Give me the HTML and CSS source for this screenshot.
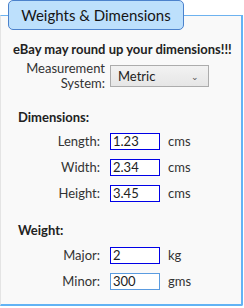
FILE: index.html
```html
<!DOCTYPE html>
<html lang="en">
<head>
  <meta charset="UTF-8">
  <title>Weights &amp; Dimensions</title>
  <link rel="stylesheet" href="styles.css">
</head>
<body>

  <fieldset class="group">
    <legend class="tab">Weights &amp; Dimensions</legend>

    <p class="warn">eBay may round up your dimensions!!!</p>

    <div class="row system">
      <label class="lbl">Measurement<br>System:</label>
      <div class="select">Metric <span class="chev">&#8964;</span></div>
    </div>

    <h3 class="section">Dimensions:</h3>

    <div class="row">
      <label class="lbl">Length:</label>
      <input class="box" value="1.23">
      <span class="unit">cms</span>
    </div>
    <div class="row">
      <label class="lbl">Width:</label>
      <input class="box" value="2.34">
      <span class="unit">cms</span>
    </div>
    <div class="row">
      <label class="lbl">Height:</label>
      <input class="box" value="3.45">
      <span class="unit">cms</span>
    </div>

    <h3 class="section weight">Weight:</h3>

    <div class="row">
      <label class="lbl">Major:</label>
      <input class="box" value="2">
      <span class="unit">kg</span>
    </div>
    <div class="row">
      <label class="lbl">Minor:</label>
      <input class="box soft" value="300">
      <span class="unit">gms</span>
    </div>
  </fieldset>

</body>
</html>
```

FILE: styles.css
```css
body {
  margin: 0;
  background: #fff;
  font-family: Lato, "Open Sans", sans-serif;
  font-size: 13px;
  color: #222;
}
.group {
  margin: 0;
  padding: 0;
  width: 243px;
  height: 306px;
  box-sizing: border-box;
  background: #f9f9f9;
  border-top: 1px solid #6db2ef;
  border-right: 2px solid #62b3f5;
  border-bottom: 2px solid #62b3f5;
  border-left: 1px solid #e4e4e4;
  border-radius: 0 0 2px 0;
}
.tab {
  margin-left: 7px;
  width: 176px;
  height: 30px;
  box-sizing: border-box;
  padding: 0 0 1px;
  display: flex;
  align-items: center;
  justify-content: center;
  font-size: 15px;
  color: #151515;
  background: #bde0fc;
  border: 1px solid #4c82cc;
  border-radius: 5px;
}
.warn {
  margin: 11px 0 0 12px;
  font-weight: bold;
  line-height: 16px;
}
.row {
  display: flex;
  align-items: center;
  height: 26px;
}
.lbl {
  width: 99px;
  margin-right: 10px;
  text-align: right;
  color: #333;
}
.system {
  height: 30px;
  margin-top: 4px;
}
.system .lbl {
  width: 104px;
  margin-right: 5px;
  line-height: 15px;
}
.select {
  width: 99px;
  height: 22px;
  box-sizing: border-box;
  padding-left: 7px;
  display: flex;
  align-items: center;
  justify-content: space-between;
  border: 1px solid #acacac;
  background: linear-gradient(#f2f2f2, #e6e6e6);
  color: #222;
}
.chev {
  margin-right: 9px;
  font-size: 9px;
  color: #555;
}
.section {
  margin: 18px 0 3px 17px;
  font-size: 13px;
  font-weight: bold;
  line-height: 16px;
}
.weight {
  margin-top: 16px;
  margin-bottom: 4px;
}
.box {
  width: 50px;
  height: 17px;
  box-sizing: border-box;
  margin: 0;
  padding: 0 2px;
  border: 1px solid #0000e6;
  background: #fff;
  font: inherit;
  color: #222;
}
.box.soft {
  border-color: #5a9be0;
}
.unit {
  margin-left: 8px;
  color: #333;
}
```
